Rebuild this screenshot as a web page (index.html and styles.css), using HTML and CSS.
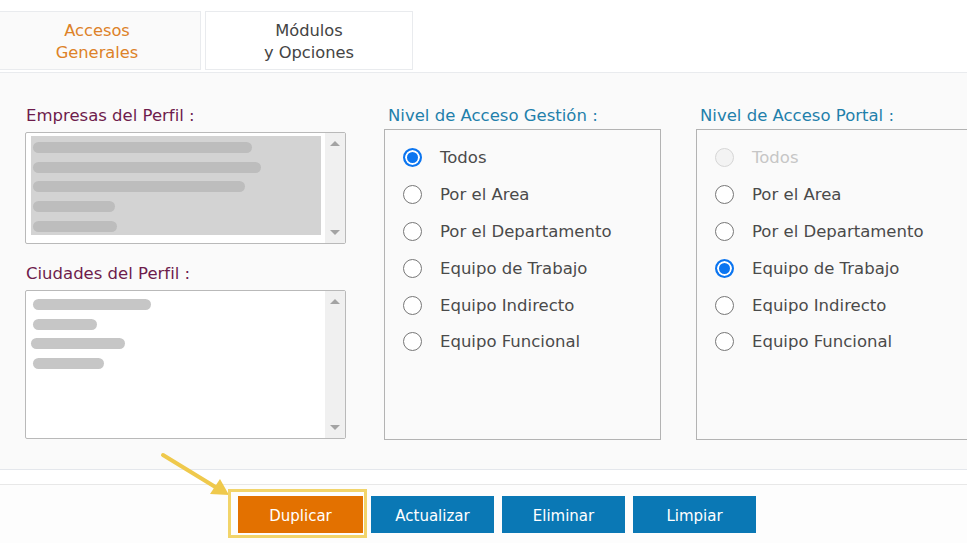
FILE: index.html
```html
<!DOCTYPE html>
<html lang="es">
<head>
<meta charset="utf-8">
<title>Perfil</title>
<link rel="stylesheet" href="styles.css">
</head>
<body>
<div class="tabs">
  <div class="tab tab-active">Accesos<br>Generales</div>
  <div class="tab">Módulos<br>y Opciones</div>
</div>
<div class="panel">
  <div class="col-lists">
    <div class="field-label">Empresas del Perfil :</div>
    <div class="listbox lb-empresas">
      <div class="list-items selected">
        <div class="item"><span class="pill" style="width:219px"></span></div>
        <div class="item"><span class="pill" style="width:228px"></span></div>
        <div class="item"><span class="pill" style="width:212px"></span></div>
        <div class="item"><span class="pill" style="width:82px"></span></div>
        <div class="item"><span class="pill" style="width:84px"></span></div>
      </div>
      <div class="scrollbar"><span class="arr up"></span><span class="arr down"></span></div>
    </div>
    <div class="field-label second">Ciudades del Perfil :</div>
    <div class="listbox lb-ciudades">
      <div class="list-items">
        <div class="item"><span class="pill light" style="width:118px"></span></div>
        <div class="item"><span class="pill light" style="width:64px"></span></div>
        <div class="item"><span class="pill light shift" style="width:94px"></span></div>
        <div class="item"><span class="pill light" style="width:71px"></span></div>
      </div>
      <div class="scrollbar"><span class="arr up"></span><span class="arr down"></span></div>
    </div>
  </div>
  <div class="col-radio">
    <div class="field-label blue">Nivel de Acceso Gestión :</div>
    <div class="radio-box">
      <div class="radio-row"><span class="radio checked"></span>Todos</div>
      <div class="radio-row"><span class="radio"></span>Por el Area</div>
      <div class="radio-row"><span class="radio"></span>Por el Departamento</div>
      <div class="radio-row"><span class="radio"></span>Equipo de Trabajo</div>
      <div class="radio-row"><span class="radio"></span>Equipo Indirecto</div>
      <div class="radio-row"><span class="radio"></span>Equipo Funcional</div>
    </div>
  </div>
  <div class="col-radio col-portal">
    <div class="field-label blue">Nivel de Acceso Portal :</div>
    <div class="radio-box">
      <div class="radio-row disabled"><span class="radio"></span>Todos</div>
      <div class="radio-row"><span class="radio"></span>Por el Area</div>
      <div class="radio-row"><span class="radio"></span>Por el Departamento</div>
      <div class="radio-row"><span class="radio checked"></span>Equipo de Trabajo</div>
      <div class="radio-row"><span class="radio"></span>Equipo Indirecto</div>
      <div class="radio-row"><span class="radio"></span>Equipo Funcional</div>
    </div>
  </div>
</div>
<div class="gap-band"></div>
<div class="actions">
  <svg class="pointer" width="80" height="50" viewBox="0 0 80 50">
    <line x1="4" y1="3" x2="58" y2="36" stroke="#efc94c" stroke-width="4" stroke-linecap="round"/>
    <polygon points="70,43 51,42 61,27" fill="#efc94c"/>
  </svg>
  <div class="highlight"><button class="btn btn-orange">Duplicar</button></div>
  <button class="btn">Actualizar</button>
  <button class="btn">Eliminar</button>
  <button class="btn">Limpiar</button>
</div>
</body>
</html>
```

FILE: styles.css
```css
* { box-sizing: border-box; }
html, body { margin: 0; padding: 0; }
body {
  width: 967px;
  height: 543px;
  overflow: hidden;
  background: #fdfdfd;
  font-family: "DejaVu Sans", Verdana, sans-serif;
  font-size: 16px;
  color: #444;
}
.tabs {
  display: flex;
  gap: 4px;
  padding-top: 11px;
  background: #fff;
  height: 72px;
}
.tab {
  width: 208px;
  height: 59px;
  border: 1px solid #e9ebee;
  background: #fff;
  text-align: center;
  line-height: 22px;
  padding-top: 8px;
  font-size: 16.3px;
  color: #444;
}
.tab-active {
  width: 201px;
  background: #fafafa;
  color: #dd8228;
  border-left: none;
  padding-right: 6px;
}
.panel {
  display: flex;
  height: 398px;
  border-top: 1px solid #e9ebee;
  border-bottom: 1px solid #e4e7ec;
  background: #fafafa;
  padding: 32px 0 0 25px;
}
.col-lists { width: 321px; flex: none; }
.field-label {
  font-size: 16.5px;
  line-height: 22px;
  color: #6e1c4c;
  padding-left: 1px;
  margin-bottom: 5px;
  white-space: nowrap;
}
.field-label.second { margin-top: 19px; }
.field-label.blue { color: #1f80ab; padding-left: 4px; margin-bottom: 2px; }
.listbox {
  display: flex;
  border: 1px solid #b9b9b9;
  border-radius: 2px;
  background: #fff;
}
.lb-empresas { height: 112px; }
.lb-ciudades { height: 149px; }
.list-items {
  flex: 1;
  margin: 3px 3px 0 5px;
}
.list-items.selected {
  background: #d3d3d3;
  height: 99px;
  flex: none;
  width: 290px;
}
.item {
  height: 19.7px;
  padding-top: 6px;
}
.pill {
  display: block;
  height: 11px;
  border-radius: 6px;
  background: #bdbdbd;
  margin-left: 2px;
}
.lb-ciudades .item { padding-top: 5px; }
.pill.light { background: #c6c6c6; }
.pill.shift { margin-left: 0; }
.lb-ciudades .list-items { margin-top: 3px; }
.scrollbar {
  margin-left: auto;
  width: 20px;
  background: #f0f0f0;
  position: relative;
}
.arr {
  position: absolute;
  left: 5px;
  width: 0; height: 0;
  border-left: 5px solid transparent;
  border-right: 5px solid transparent;
}
.arr.up { top: 8px; border-bottom: 5px solid #a3a3a3; }
.arr.down { bottom: 8px; border-top: 5px solid #a3a3a3; }
.col-radio { margin-left: 38px; width: 277px; flex: none; }
.col-portal { margin-left: 35px; width: 300px; }
.radio-box {
  height: 311px;
  border: 1px solid #b3b3b3;
  background: #fafafa;
  padding-top: 9px;
}
.radio-row {
  display: flex;
  align-items: center;
  height: 36.9px;
  padding-left: 18px;
  font-size: 16.5px;
  color: #4a4a4a;
  white-space: nowrap;
}
.radio {
  width: 19px;
  height: 19px;
  border: 1px solid #777;
  border-radius: 50%;
  background: #fff;
  margin-right: 18px;
  flex: none;
}
.radio.checked {
  border: 2px solid #0b75f0;
  box-shadow: inset 0 0 0 2px #fff;
  background: #0b75f0;
}
.radio-row.disabled { color: #c6c6c6; }
.radio-row.disabled .radio { border-color: #d6d6d6; background: #f3f3f3; }
.gap-band {
  height: 15px;
  background: #fff;
  border-bottom: 1px solid #e8e8e8;
}
.actions {
  position: relative;
  display: flex;
  gap: 8px;
  padding: 11px 0 0 238px;
}
.btn {
  width: 123px;
  height: 37px;
  border: none;
  background: #0a78b5;
  color: #fff;
  font-family: "DejaVu Sans", Verdana, sans-serif;
  font-size: 15px;
  padding: 2px 0 0;
}
.btn-orange { background: #e37100; width: 125px; }
.highlight { position: relative; display: flex; }
.highlight::after {
  content: "";
  position: absolute;
  left: -10px; top: -7px; right: -4px; bottom: -5px;
  border: 3px solid #f2d46a;
}
.pointer {
  position: absolute;
  left: 159px;
  top: -33px;
}
```
